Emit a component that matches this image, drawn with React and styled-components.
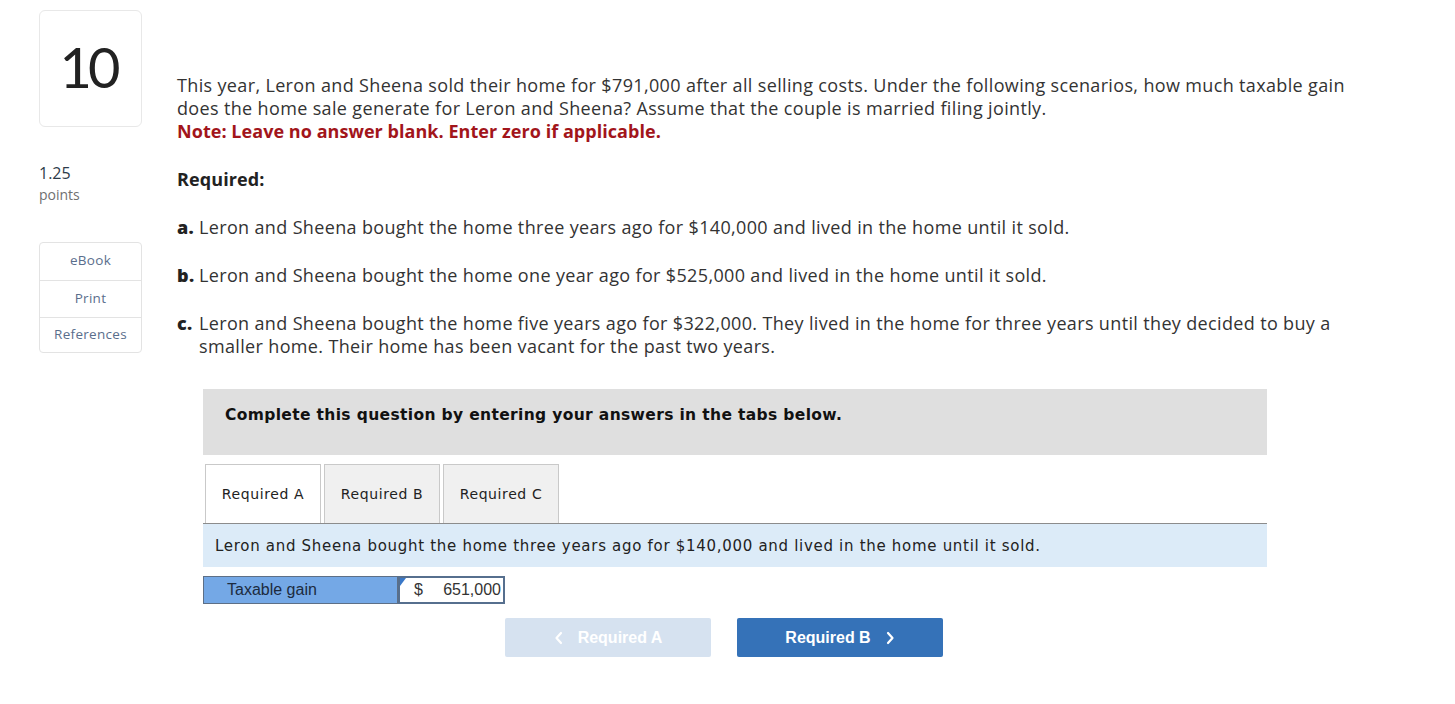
import React from "react";
import styled, { createGlobalStyle } from "styled-components";

const Global = createGlobalStyle`
  html, body { margin: 0; padding: 0; background: #fff; }
  body { font-family: "Open Sans", Lato, sans-serif; color: #333; }
  * { box-sizing: border-box; }
`;

const Page = styled.div`
  display: flex;
  align-items: flex-start;
  padding: 10px 0 0 39px;
  width: 1455px;
  height: 704px;
  overflow: hidden;
`;

const Sidebar = styled.aside`
  width: 103px;
  flex: none;
  display: flex;
  flex-direction: column;
`;

const NumberBox = styled.div`
  height: 117px;
  border: 1px solid #e8e8e8;
  border-radius: 6px;
  display: flex;
  align-items: center;
  justify-content: center;
  font-family: Lato, sans-serif;
  font-size: 56px;
  letter-spacing: -4px;
  color: #222;
  padding: 0 5px 4px 0;
`;

const Points = styled.div`
  margin-top: 36px;
  line-height: 21px;
`;

const PointsValue = styled.div`
  font-size: 16px;
  color: #2d3b4a;
`;

const PointsLabel = styled.div`
  font-size: 14px;
  color: #707070;
`;

const LinkBox = styled.nav`
  margin-top: 37px;
  border: 1px solid #e3e3e3;
  border-radius: 4px;
  display: flex;
  flex-direction: column;
`;

const LinkItem = styled.div`
  height: ${(p) => p.$h}px;
  display: flex;
  align-items: center;
  justify-content: center;
  font-size: 13.5px;
  letter-spacing: 0.3px;
  color: #5a6e8c;
  padding-bottom: 3px;
  & + & { border-top: 1px solid #e3e3e3; }
`;

const Main = styled.main`
  margin-left: 35px;
  width: 1190px;
  padding-top: 64px;
`;

const Para = styled.p`
  margin: 0 0 25px;
  font-size: 18px;
  letter-spacing: 0.35px;
  line-height: 23px;
  color: #333;
`;

const Note = styled.span`
  display: block;
  color: #a2151b;
  font-weight: 700;
  letter-spacing: 0.05px;
`;

const Strong = styled.strong`
  font-weight: 700;
  color: #222;
  letter-spacing: 0.1px;
`;

const Item = styled.div`
  display: flex;
  margin: 0 0 25px;
  font-size: 18px;
  letter-spacing: 0.35px;
  line-height: 23px;
  color: #333;
  width: 1180px;
`;

const ItemLabel = styled.span`
  font-weight: 800;
  color: #222;
  flex: none;
  width: 22px;
`;

const Panel = styled.section`
  margin: 31px 0 0 26px;
  width: 1064px;
`;

const Banner = styled.div`
  height: 66px;
  background: #dfdfdf;
  padding: 17px 22px 0;
  font-family: "DejaVu Sans", Verdana, sans-serif;
  font-weight: 700;
  font-size: 15.5px;
  letter-spacing: 0.35px;
  color: #111;
`;

const Tabs = styled.div`
  display: flex;
  gap: 3px;
  margin-top: 9px;
  padding-left: 2px;
`;

const Tab = styled.div`
  width: 116px;
  height: 59px;
  border: 1px solid #c9c9c9;
  border-bottom: none;
  background: ${(p) => (p.$active ? "#fff" : "#f0f0f0")};
  display: flex;
  align-items: center;
  justify-content: center;
  font-family: "DejaVu Sans", Verdana, sans-serif;
  font-size: 14px;
  letter-spacing: 0.6px;
  color: #222;
`;

const Prompt = styled.div`
  height: 44px;
  border-top: 1px solid #8c8c8c;
  background: #dcebf8;
  display: flex;
  align-items: center;
  padding-left: 12px;
  font-family: "DejaVu Sans", Verdana, sans-serif;
  font-size: 15px;
  letter-spacing: 0.7px;
  color: #222;
`;

const AnswerRow = styled.div`
  margin-top: 9px;
  display: flex;
  width: 302px;
  height: 28px;
  font-family: "Liberation Sans", Arial, sans-serif;
  font-size: 16px;
`;

const LabelCell = styled.div`
  width: 195px;
  background: #74a8e6;
  border: 1px solid #5d6f86;
  display: flex;
  align-items: center;
  padding-left: 23px;
  color: #1c2b40;
`;

const InputCell = styled.div`
  position: relative;
  flex: 1;
  background: #fff;
  border: 2px solid #566f8e;
  display: flex;
  align-items: center;
  justify-content: space-between;
  padding: 0 2px 0 14px;
  color: #333;
`;

const Flag = styled.span`
  position: absolute;
  left: 0;
  top: 0;
  width: 0;
  height: 0;
  border-top: 8px solid #3a78c8;
  border-right: 6px solid transparent;
`;

const NavRow = styled.div`
  display: flex;
  gap: 26px;
  margin: 14px 0 0 302px;
`;

const NavButton = styled.div`
  width: 206px;
  height: 39px;
  border-radius: 2px;
  background: ${(p) => (p.$disabled ? "#d6e2f0" : "#3572b8")};
  color: #fff;
  display: flex;
  align-items: center;
  justify-content: center;
  gap: 14px;
  font-family: "Liberation Sans", Arial, sans-serif;
  font-weight: 700;
  font-size: 16px;
  svg { flex: none; }
`;

const Chevron = ({ dir }) => (
  <svg width="10" height="14" viewBox="0 0 10 14">
    <path
      d={dir === "left" ? "M7 2 L2.5 7 L7 12" : "M3 2 L7.5 7 L3 12"}
      fill="none"
      stroke="#fff"
      strokeWidth="2.2"
      strokeLinecap="round"
      strokeLinejoin="round"
    />
  </svg>
);

export default function App() {
  return (
    <>
      <Global />
      <Page>
        <Sidebar>
          <NumberBox>10</NumberBox>
          <Points>
            <PointsValue>1.25</PointsValue>
            <PointsLabel>points</PointsLabel>
          </Points>
          <LinkBox>
            <LinkItem $h={37}>eBook</LinkItem>
            <LinkItem $h={37}>Print</LinkItem>
            <LinkItem $h={35}>References</LinkItem>
          </LinkBox>
        </Sidebar>
        <Main>
          <Para>
            This year, Leron and Sheena sold their home for $791,000 after all selling costs. Under the following
            scenarios, how much taxable gain does the home sale generate for Leron and Sheena? Assume that the couple
            is married filing jointly.
            <Note>Note: Leave no answer blank. Enter zero if applicable.</Note>
          </Para>
          <Para>
            <Strong>Required:</Strong>
          </Para>
          <Item>
            <ItemLabel>a.</ItemLabel>
            <span>Leron and Sheena bought the home three years ago for $140,000 and lived in the home until it sold.</span>
          </Item>
          <Item>
            <ItemLabel>b.</ItemLabel>
            <span>Leron and Sheena bought the home one year ago for $525,000 and lived in the home until it sold.</span>
          </Item>
          <Item>
            <ItemLabel>c.</ItemLabel>
            <span>
              Leron and Sheena bought the home five years ago for $322,000. They lived in the home for three years
              until they decided to buy a smaller home. Their home has been vacant for the past two years.
            </span>
          </Item>
          <Panel>
            <Banner>Complete this question by entering your answers in the tabs below.</Banner>
            <Tabs>
              <Tab $active>Required A</Tab>
              <Tab>Required B</Tab>
              <Tab>Required C</Tab>
            </Tabs>
            <Prompt>Leron and Sheena bought the home three years ago for $140,000 and lived in the home until it sold.</Prompt>
            <AnswerRow>
              <LabelCell>Taxable gain</LabelCell>
              <InputCell>
                <Flag />
                <span>$</span>
                <span>651,000</span>
              </InputCell>
            </AnswerRow>
            <NavRow>
              <NavButton $disabled>
                <Chevron dir="left" />
                Required A
              </NavButton>
              <NavButton>
                Required B
                <Chevron dir="right" />
              </NavButton>
            </NavRow>
          </Panel>
        </Main>
      </Page>
    </>
  );
}
